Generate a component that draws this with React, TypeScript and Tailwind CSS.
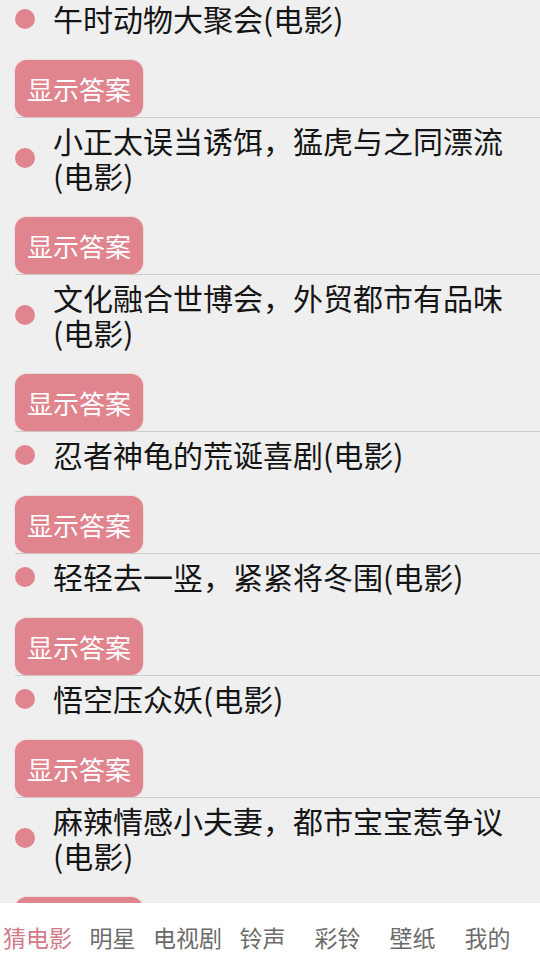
import React from 'react';

const riddles: string[][] = [
  ['午时动物大聚会(电影)'],
  ['小正太误当诱饵，猛虎与之同漂流', '(电影)'],
  ['文化融合世博会，外贸都市有品味', '(电影)'],
  ['忍者神龟的荒诞喜剧(电影)'],
  ['轻轻去一竖，紧紧将冬围(电影)'],
  ['悟空压众妖(电影)'],
  ['麻辣情感小夫妻，都市宝宝惹争议', '(电影)'],
  ['狼来了(电影)'],
];

const tabs = ['猜电影', '明星', '电视剧', '铃声', '彩铃', '壁纸', '我的'];

export default function App() {
  return (
    <div
      className="flex h-[960px] w-[540px] flex-col overflow-hidden bg-[#efefef]"
      style={{ fontFamily: '"Noto Sans CJK SC", "Noto Sans", sans-serif' }}
    >
      <main className="min-h-0 flex-1 overflow-hidden">
        <div className="-mt-[4px]">
          {riddles.map((lines, i) => (
            <div key={i} className="ml-[15px] border-b border-[#cfcfcf] pt-[5px]">
              <div className="flex items-center">
                <span className="h-[20px] w-[20px] shrink-0 rounded-full bg-[#e0848e]" />
                <div className="ml-[18px] text-[30px] leading-[35px] text-[#151515]">
                  {lines.map((l) => (
                    <div key={l}>{l}</div>
                  ))}
                </div>
              </div>
              <button className="mt-[24px] h-[57px] rounded-[12px] bg-[#e0848e] px-[12px] text-[26px] text-white shadow-[0_0_2px_rgba(224,132,142,0.6)]">
                显示答案
              </button>
            </div>
          ))}
        </div>
      </main>
      <nav className="flex h-[57px] shrink-0 bg-white pt-[12px]">
        {tabs.map((t, i) => (
          <div
            key={t}
            className={
              'flex w-[75px] items-center justify-center text-[23px] ' +
              (i === 0 ? 'text-[#d27a88]' : 'text-[#6b6b6b]')
            }
          >
            {t}
          </div>
        ))}
      </nav>
    </div>
  );
}
